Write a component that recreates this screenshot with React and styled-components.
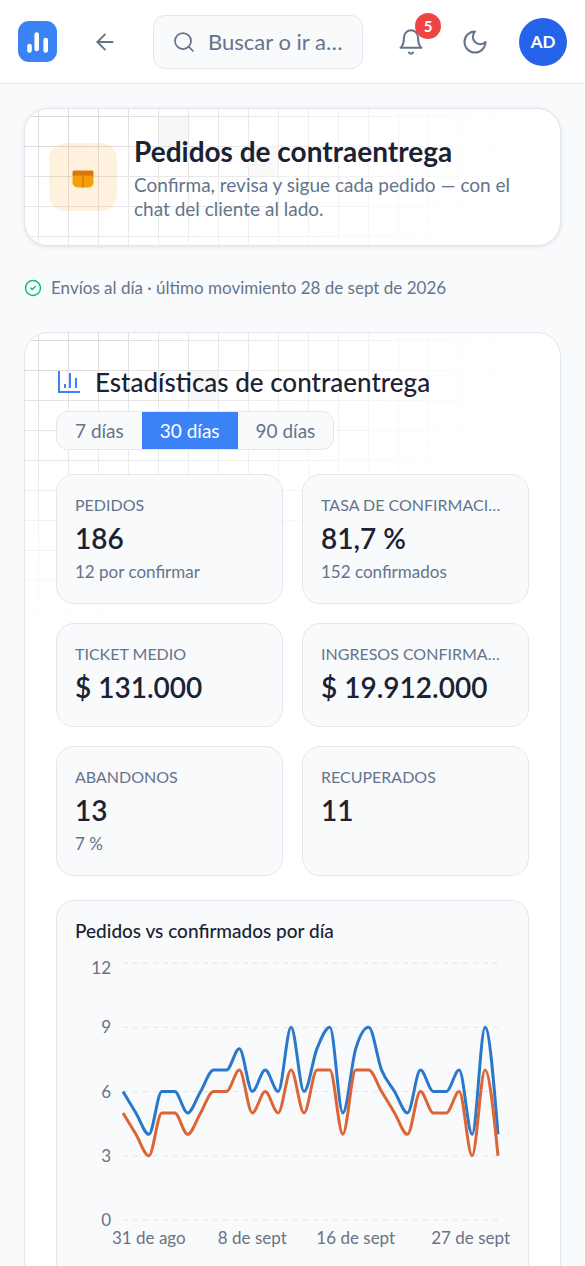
import React, { useState } from "react";
import styled, { createGlobalStyle } from "styled-components";
import { ArrowLeft, Search, CircleCheck } from "lucide-react";

const GlobalStyle = createGlobalStyle`
  * {
    box-sizing: border-box;
  }
  body {
    margin: 0;
    background: #f9fafc;
    color: #1a2233;
    font-family: Lato, "Open Sans", sans-serif;
    font-weight: 400;
  }
  button, input {
    font-family: inherit;
  }
`;

const Header = styled.header`
  display: flex;
  align-items: center;
  gap: 28px;
  height: 84px;
  padding: 0 18px;
  background: #ffffff;
  border-bottom: 1px solid #e5e8ee;
`;

const HomeLink = styled.a`
  display: flex;
`;

const IconButton = styled.button`
  position: relative;
  display: flex;
  align-items: center;
  justify-content: center;
  flex: none;
  width: 40px;
  height: 40px;
  padding: 0;
  border: 0;
  background: none;
  color: #64748b;
  cursor: pointer;
`;

const SearchBox = styled.label`
  display: flex;
  align-items: center;
  gap: 12px;
  flex: 1;
  min-width: 0;
  height: 54px;
  padding: 0 18px;
  border: 1px solid #e2e6ee;
  border-radius: 12px;
  background: #f9fafc;
  color: #64748b;

  svg {
    flex: none;
  }
`;

const SearchInput = styled.input`
  width: 100%;
  min-width: 0;
  padding: 0;
  border: 0;
  outline: 0;
  background: none;
  color: #1a2233;
  font-size: 22px;
  text-overflow: ellipsis;

  &::placeholder {
    color: #64748b;
    opacity: 1;
  }
`;

const Actions = styled.div`
  display: flex;
  align-items: center;
  gap: 24px;
`;

const Badge = styled.span`
  position: absolute;
  top: -9px;
  right: -10px;
  width: 26px;
  height: 26px;
  border-radius: 50%;
  background: #ef4444;
  color: #ffffff;
  font-size: 15px;
  font-weight: 700;
  line-height: 26px;
  text-align: center;
`;

const Avatar = styled.button`
  width: 48px;
  height: 48px;
  padding: 0;
  border: 0;
  border-radius: 50%;
  background: #2563eb;
  color: #ffffff;
  font-size: 17px;
  font-weight: 700;
  cursor: pointer;
`;

const Main = styled.main`
  display: flex;
  flex-direction: column;
  padding: 24px;
`;

const Card = styled.section`
  position: relative;
  overflow: hidden;
  border: 1px solid #e2e6ec;
  border-radius: 24px;
  background: #ffffff;
  box-shadow: ${(p) => (p.$raised ? "0 1px 4px rgba(15, 23, 42, 0.1)" : "none")};
`;

const Pattern = styled.svg`
  position: absolute;
  inset: 0;
  width: 100%;
  height: 100%;
  max-height: 300px;
  mask-image: radial-gradient(ellipse 500px 300px at 0 0, #000 0%, transparent 100%);
  pointer-events: none;
`;

const HeroBody = styled.div`
  position: relative;
  display: flex;
  align-items: center;
  gap: 17px;
  padding: 24px;
`;

const HeroIcon = styled.div`
  display: flex;
  align-items: center;
  justify-content: center;
  flex: none;
  width: 68px;
  height: 68px;
  border-radius: 16px;
  background: rgba(245, 158, 11, 0.13);
`;

const HeroTitle = styled.h1`
  margin: 0 0 4px;
  font-size: 28px;
  font-weight: 700;
  line-height: 36px;
`;

const HeroText = styled.p`
  margin: 0;
  color: #64748b;
  font-size: 19px;
  line-height: 24px;
`;

const Status = styled.p`
  display: flex;
  align-items: center;
  gap: 9px;
  margin: 29px 0 31px;
  color: #64748b;
  font-size: 17px;
  line-height: 26px;
`;

const StatsBody = styled.div`
  position: relative;
  padding: 31px;
`;

const StatsTitle = styled.h2`
  display: flex;
  align-items: center;
  gap: 15px;
  margin: 0 0 11px;
  font-size: 26px;
  font-weight: 500;
  line-height: 36px;
`;

const Tabs = styled.div`
  display: inline-flex;
  height: 39px;
  overflow: hidden;
  border: 1px solid #e2e6ee;
  border-radius: 12px;
  background: #f9fafc;
`;

const Tab = styled.button`
  padding: 0 18px;
  border: 0;
  background: ${(p) => (p.$active ? "#3b82f6" : "transparent")};
  color: ${(p) => (p.$active ? "#ffffff" : "#64748b")};
  font-size: 19px;
  cursor: pointer;
`;

const Metrics = styled.div`
  display: grid;
  grid-template-columns: 1fr 1fr;
  gap: 19px;
  margin: 24px 0;
`;

const Panel = styled.div`
  min-width: 0;
  padding: 18px;
  border: 1px solid #e2e6ee;
  border-radius: 18px;
  background: #f9fafc;
`;

const MetricLabel = styled.div`
  overflow: hidden;
  color: #64748b;
  font-size: 16px;
  line-height: 24px;
  text-overflow: ellipsis;
  text-transform: uppercase;
  white-space: nowrap;
`;

const MetricValue = styled.div`
  font-size: 28px;
  font-weight: 600;
  line-height: 42px;
`;

const MetricNote = styled.div`
  color: #64748b;
  font-size: 17px;
  line-height: 26px;
`;

const ChartTitle = styled.h3`
  margin: 0;
  font-size: 19px;
  font-weight: 500;
  line-height: 24px;
`;

const ChartSvg = styled.svg`
  display: block;
  width: 100%;
  overflow: visible;

  text {
    fill: #6b7280;
    font-size: 17px;
  }
`;

const metrics = [
  { label: "Pedidos", value: "186", note: "12 por confirmar" },
  { label: "Tasa de confirmación", value: "81,7 %", note: "152 confirmados" },
  { label: "Ticket medio", value: "$ 131.000" },
  { label: "Ingresos confirmados", value: "$ 19.912.000" },
  { label: "Abandonos", value: "13", note: "7 %" },
  { label: "Recuperados", value: "11" },
];

const orders = [6, 5, 4, 6, 6, 5, 6, 7, 7, 8, 6, 7, 6, 9, 6, 8, 9, 5, 8, 9, 7, 6, 5, 7, 6, 6, 7, 4, 9, 4];
const confirmed = [5, 4, 3, 5, 5, 4, 5, 6, 6, 7, 5, 6, 5, 7, 5, 7, 7, 4, 7, 7, 6, 5, 4, 6, 5, 5, 6, 3, 7, 3];

const LEFT = 48;
const RIGHT = 423;
const TOP = 20;
const BOTTOM = 277;

const xAt = (i) => LEFT + (i * (RIGHT - LEFT)) / (orders.length - 1);
const yAt = (v) => BOTTOM - (v * (BOTTOM - TOP)) / 12;

// monotone cubic, so the line never overshoots a day's value
const linePath = (values) => {
  const step = xAt(1) - xAt(0);
  const ys = values.map(yAt);
  const slopes = ys.slice(1).map((y, i) => (y - ys[i]) / step);
  const last = ys.length - 1;
  const tangents = ys.map((_, i) => {
    if (i === 0 || i === last) return 0;
    const a = slopes[i - 1];
    const b = slopes[i];
    if (a * b <= 0) return 0;
    return Math.sign(a) * 2 * Math.min(Math.abs(a), Math.abs(b), Math.abs(a + b) / 4);
  });
  tangents[0] = (3 * slopes[0] - tangents[1]) / 2;
  tangents[last] = (3 * slopes[last - 1] - tangents[last - 1]) / 2;
  let d = `M${xAt(0)},${ys[0]}`;
  for (let i = 1; i <= last; i++) {
    const c1 = `${xAt(i - 1) + step / 3},${ys[i - 1] + (tangents[i - 1] * step) / 3}`;
    const c2 = `${xAt(i) - step / 3},${ys[i] - (tangents[i] * step) / 3}`;
    d += `C${c1} ${c2} ${xAt(i)},${ys[i]}`;
  }
  return d;
};

const GridPattern = ({ id, squares }) => (
  <Pattern aria-hidden="true">
    <defs>
      <pattern id={id} width="30" height="30" x="13" y="7" patternUnits="userSpaceOnUse">
        <path d="M0.5 30V0.5H30" fill="none" stroke="#1f1710" strokeOpacity="0.17" />
      </pattern>
    </defs>
    <rect width="100%" height="100%" fill={`url(#${id})`} />
    {squares.map(([col, row]) => (
      <rect key={`${col}-${row}`} x={14 + col * 30} y={8 + row * 30} width="29" height="29" fill="#000" fillOpacity="0.05" />
    ))}
  </Pattern>
);

const Logo = () => (
  <svg width="39" height="41" viewBox="0 0 39 41">
    <rect width="39" height="41" rx="11" fill="#3b82f6" />
    <path d="M11.5 25v4.5M18.7 13.5v14.5M27.7 19v10.5" stroke="#fff" strokeWidth="4.6" strokeLinecap="round" />
  </svg>
);

const BellIcon = () => (
  <svg width="28" height="28" viewBox="0 0 24 24" fill="none" stroke="currentColor" strokeWidth="1.75" strokeLinecap="round" strokeLinejoin="round">
    <path d="M6 8a6 6 0 0 1 12 0c0 7 3 9 3 9H3s3-2 3-9" />
    <path d="M10.3 21a1.94 1.94 0 0 0 3.4 0" />
  </svg>
);

const MoonIcon = () => (
  <svg width="28" height="28" viewBox="0 0 24 24" fill="none" stroke="currentColor" strokeWidth="1.75" strokeLinecap="round" strokeLinejoin="round">
    <path d="M12 3a6 6 0 0 0 9 9 9 9 0 1 1-9-9Z" />
  </svg>
);

const BoxIcon = () => (
  <svg width="22" height="22" viewBox="0 -4 22 22">
    <path d="M0.5 5h21v7.5a5 5 0 0 1-5 5h-11a5 5 0 0 1-5-5z" fill="#f59e0b" />
    <path d="M2 0.5h18a1.500 1.500 0 0 1 1.500 1.500V5.500h-21V2a1.500 1.500 0 0 1 1.500-1.500z" fill="#d97706" />
    <path d="M11 5v12.5" stroke="#d97706" strokeWidth="1.5" />
  </svg>
);

const BarsIcon = () => (
  <svg width="24" height="24" viewBox="0 0 24 24" fill="none" stroke="#3b82f6" strokeWidth="2">
    <path d="M3 1v21h21M9 14v4M14 3v15M20 8v10" />
  </svg>
);

const Chart = () => (
  <ChartSvg viewBox="0 0 435 330" role="img" aria-label="Pedidos vs confirmados por día">
    {[0, 3, 6, 9, 12].map((v) => (
      <g key={v}>
        <line x1={LEFT} x2={RIGHT} y1={yAt(v)} y2={yAt(v)} stroke="#e2e5ea" strokeDasharray="5 5" />
        <text x="36" y={yAt(v) + (v === 12 ? 11 : 6)} textAnchor="end">{v}</text>
      </g>
    ))}
    <path d={linePath(orders)} fill="none" stroke="#2a78c9" strokeWidth="3" />
    <path d={linePath(confirmed)} fill="none" stroke="#dd6535" strokeWidth="3" />
    <text x={xAt(2)} y="301" textAnchor="middle">31 de ago</text>
    <text x={xAt(10)} y="301" textAnchor="middle">8 de sept</text>
    <text x={xAt(18)} y="301" textAnchor="middle">16 de sept</text>
    <text x="435" y="301" textAnchor="end">27 de sept</text>
  </ChartSvg>
);

const App = () => {
  const [days, setDays] = useState(30);

  return (
    <>
      <GlobalStyle />
      <Header>
        <HomeLink href="#" aria-label="Inicio">
          <Logo />
        </HomeLink>
        <IconButton aria-label="Volver">
          <ArrowLeft size={26} strokeWidth={1.75} />
        </IconButton>
        <SearchBox>
          <Search size={24} strokeWidth={1.75} />
          <SearchInput type="text" aria-label="Buscar" placeholder="Buscar o ir a…" />
        </SearchBox>
        <Actions>
          <IconButton aria-label="Notificaciones">
            <BellIcon />
            <Badge>5</Badge>
          </IconButton>
          <IconButton aria-label="Tema oscuro">
            <MoonIcon />
          </IconButton>
          <Avatar>AD</Avatar>
        </Actions>
      </Header>

      <Main>
        <Card $raised>
          <GridPattern id="hero-grid" squares={[[4, 0], [7, 1]]} />
          <HeroBody>
            <HeroIcon>
              <BoxIcon />
            </HeroIcon>
            <div>
              <HeroTitle>Pedidos de contraentrega</HeroTitle>
              <HeroText>Confirma, revisa y sigue cada pedido — con el chat del cliente al lado.</HeroText>
            </div>
          </HeroBody>
        </Card>

        <Status>
          <CircleCheck size={18} color="#10b981" />
          Envíos al día · último movimiento 28 de sept de 2026
        </Status>

        <Card>
          <GridPattern id="stats-grid" squares={[[5, 1]]} />
          <StatsBody>
            <StatsTitle>
              <BarsIcon />
              Estadísticas de contraentrega
            </StatsTitle>
            <Tabs>
              {[7, 30, 90].map((n) => (
                <Tab key={n} $active={n === days} aria-pressed={n === days} onClick={() => setDays(n)}>
                  {n} días
                </Tab>
              ))}
            </Tabs>
            <Metrics>
              {metrics.map((m) => (
                <Panel key={m.label}>
                  <MetricLabel>{m.label}</MetricLabel>
                  <MetricValue>{m.value}</MetricValue>
                  {m.note && <MetricNote>{m.note}</MetricNote>}
                </Panel>
              ))}
            </Metrics>
            <Panel>
              <ChartTitle>Pedidos vs confirmados por día</ChartTitle>
              <Chart />
            </Panel>
          </StatsBody>
        </Card>
      </Main>
    </>
  );
};

export default App;
